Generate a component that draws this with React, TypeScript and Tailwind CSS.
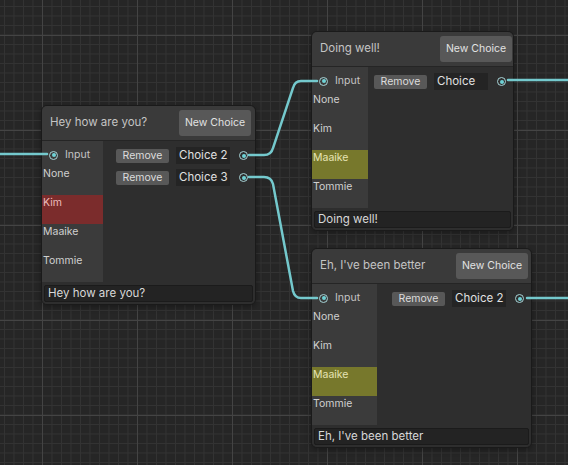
import React from "react";

type NodeData = {
  pos: string;
  title: string;
  titleBar: string;
  colW: string;
  choices: string[];
  names: string[];
  selected: number;
  selectedCls: string;
};

const names = ["None", "Kim", "Maaike", "Tommie"];

const nodes: NodeData[] = [
  {
    pos: "left-[41px] top-[105px] w-[215px]",
    title: "Hey how are you?",
    titleBar: "pr-[4px]",
    colW: "w-[61px]",
    choices: ["Choice 2", "Choice 3"],
    names,
    selected: 1,
    selectedCls: "bg-[#7b2c2c] text-[#ecbcbc]",
  },
  {
    pos: "left-[311px] top-[31px] w-[203px]",
    title: "Doing well!",
    titleBar: "pr-[1px]",
    colW: "w-[56px]",
    choices: ["Choice"],
    names,
    selected: 2,
    selectedCls: "bg-[#77782c] text-[#e6e4b4]",
  },
  {
    pos: "left-[311px] top-[248px] w-[221px]",
    title: "Eh, I've been better",
    titleBar: "pr-[3px]",
    colW: "w-[65px]",
    choices: ["Choice 2"],
    names,
    selected: 2,
    selectedCls: "bg-[#77782c] text-[#e6e4b4]",
  },
];

function Port() {
  return (
    <div className="w-[9px] h-[9px] shrink-0 rounded-full border-[1.5px] border-[#a6d3d6] flex items-center justify-center">
      <div className="w-[4px] h-[4px] rounded-full bg-[#6fd2d6]" />
    </div>
  );
}

function DialogueNode({ node }: { node: NodeData }) {
  return (
    <div
      className={`absolute ${node.pos} rounded-[6px] border border-[#1a1a1a] bg-[#2e2e2e] overflow-hidden shadow-[0_2px_6px_rgba(0,0,0,0.35)]`}
    >
      <div className={`h-[34px] flex items-center justify-between pl-[8px] ${node.titleBar} bg-[#3a3a3a]`}>
        <span className="text-[11.5px] text-[#c4c4c4]">{node.title}</span>
        <button className="w-[72px] h-[26px] rounded-[3px] bg-[#585858] text-[10.5px] text-[#e2e2e2]">
          New Choice
        </button>
      </div>
      <div className="flex border-t border-[#252525]">
        <div className={`${node.colW} shrink-0 bg-[#3b3b3b] pt-[8px]`}>
          <div className="h-[12px] flex items-center gap-[7px] pl-[7px]">
            <Port />
            <span className="text-[10.5px] text-[#c4c4c4]">Input</span>
          </div>
          <div className="mt-[5px]">
            {node.names.map((n, i) => (
              <div
                key={n}
                className={`h-[29px] pl-[1px] text-[10.5px] leading-[16px] ${
                  i === node.selected ? node.selectedCls : "text-[#d0d0d0]"
                }`}
              >
                {n}
              </div>
            ))}
          </div>
        </div>
        <div className="flex-1 pt-[7px] pr-[7px] flex flex-col gap-[7px]">
          {node.choices.map((c) => (
            <div key={c} className="h-[15px] flex items-center justify-end">
              <button className="w-[53px] h-[14px] rounded-[2px] bg-[#585858] text-[10.5px] leading-[14px] text-[#dcdcdc]">
                Remove
              </button>
              <div className="ml-[7px] w-[54px] h-[17px] bg-[#242424] pl-[3px] text-[11.5px] leading-[17px] text-[#e0e0e0]">
                {c}
              </div>
              <div className="ml-[9px]">
                <Port />
              </div>
            </div>
          ))}
        </div>
      </div>
      <div className="px-[2px] pt-[3px] pb-[2px] bg-[#2e2e2e]">
        <div className="h-[17px] bg-[#232323] border border-[#1b1b1b] rounded-[2px] pl-[3px] text-[11.5px] leading-[15px] text-[#d8d8d8]">
          {node.title}
        </div>
      </div>
    </div>
  );
}

export default function App() {
  return (
    <div
      className="relative w-[568px] h-[465px] overflow-hidden bg-[#262626] bg-[linear-gradient(to_right,#444444_1px,transparent_1px),linear-gradient(to_bottom,#444444_1px,transparent_1px),linear-gradient(to_right,#333333_1px,transparent_1px),linear-gradient(to_bottom,#333333_1px,transparent_1px)] bg-size-[95px_95px,95px_95px,9.5px_9.5px,9.5px_9.5px] bg-position-[42px_35px,42px_35px,4px_6px,4px_6px]"
      style={{ fontFamily: "Inter, 'Liberation Sans', sans-serif" }}
    >
      {nodes.map((n) => (
        <DialogueNode key={n.title} node={n} />
      ))}
      <svg
        className="absolute inset-0 pointer-events-none"
        width={568}
        height={465}
        viewBox="0 0 568 465"
        fill="none"
        stroke="#74c9cd"
        strokeWidth={2.5}
        strokeLinecap="round"
      >
        <path d="M-2 154 L47 154" />
        <path d="M249 155 L264 155 C270 155 272 152 273 148 L293 88 C294 84 296 81 301 81 L317 81" />
        <path d="M249 177 L264 177 C270 177 272 180 273 184 L293 291 C294 295 296 298 301 298 L317 298" />
        <path d="M508 80 L570 80" />
        <path d="M527 298 L570 298" />
      </svg>
    </div>
  );
}
